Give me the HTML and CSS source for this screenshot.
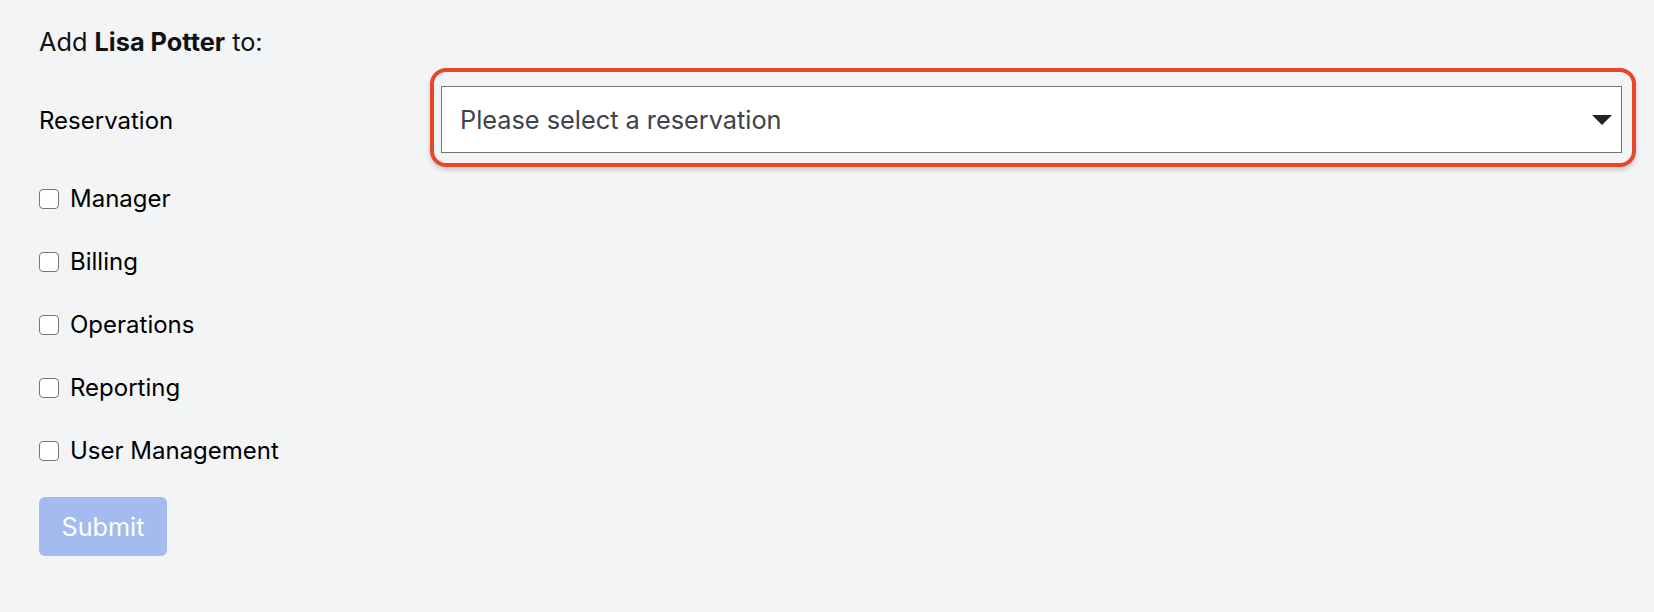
FILE: index.html
```html
<!DOCTYPE html>
<html lang="en">
<head>
<meta charset="utf-8">
<title>Add user</title>
<link rel="stylesheet" href="styles.css">
</head>
<body>
<form class="page">
  <p class="intro">Add <strong>Lisa Potter</strong> to:</p>
  <div class="field-row">
    <label class="field-label">Reservation</label>
    <div class="ring">
      <div class="select">
        <span class="placeholder">Please select a reservation</span>
        <svg class="caret" width="20" height="10" viewBox="0 0 20 10"><path d="M0 0 H20 L10 10 Z" fill="#222"/></svg>
      </div>
    </div>
  </div>
  <div class="checks">
    <label class="check"><span class="box"></span>Manager</label>
    <label class="check"><span class="box"></span>Billing</label>
    <label class="check"><span class="box"></span>Operations</label>
    <label class="check"><span class="box"></span>Reporting</label>
    <label class="check"><span class="box"></span>User Management</label>
  </div>
  <button type="button" class="submit">Submit</button>
</form>
</body>
</html>
```
FILE: styles.css
```css
html, body {
  margin: 0;
  padding: 0;
  background: #f3f4f6;
}
body {
  font-family: Inter, "Noto Sans", sans-serif;
  font-size: 24px;
  line-height: 36px;
  color: #000;
}
.page {
  padding: 24px 18px 0 39px;
}
.intro {
  margin: 0;
  color: #111;
  font-size: 25.3px;
}
.intro strong {
  font-weight: 700;
}
.field-row {
  display: flex;
  align-items: center;
  margin-top: 8px;
}
.field-label {
  width: 391px;
  flex: none;
  padding-top: 6px;
}
.ring {
  flex: 1;
  border: 4px solid #e8452b;
  border-radius: 16px;
  padding: 14px 10px 10px 7px;
  box-shadow: 0 3px 4px rgba(0, 0, 0, 0.18);
}
.select {
  height: 67px;
  box-sizing: border-box;
  background: #fff;
  border: 1px solid #757575;
  display: flex;
  align-items: center;
  justify-content: space-between;
  padding: 0 9px 0 18px;
}
.placeholder {
  color: #3e414e;
  font-size: 25.3px;
}
.caret {
  display: block;
}
.checks {
  display: flex;
  flex-direction: column;
}
.check {
  height: 63px;
  display: flex;
  align-items: center;
  gap: 11px;
}
.box {
  width: 20px;
  height: 20px;
  box-sizing: border-box;
  border: 1.5px solid #767676;
  border-radius: 4px;
  background: #fff;
  flex: none;
}
.submit {
  margin-top: 15px;
  width: 128px;
  height: 59px;
  border: none;
  border-radius: 6px;
  background: #a4bbf0;
  color: #fff;
  font-family: inherit;
  font-size: 25.2px;
  padding: 0;
}
```
